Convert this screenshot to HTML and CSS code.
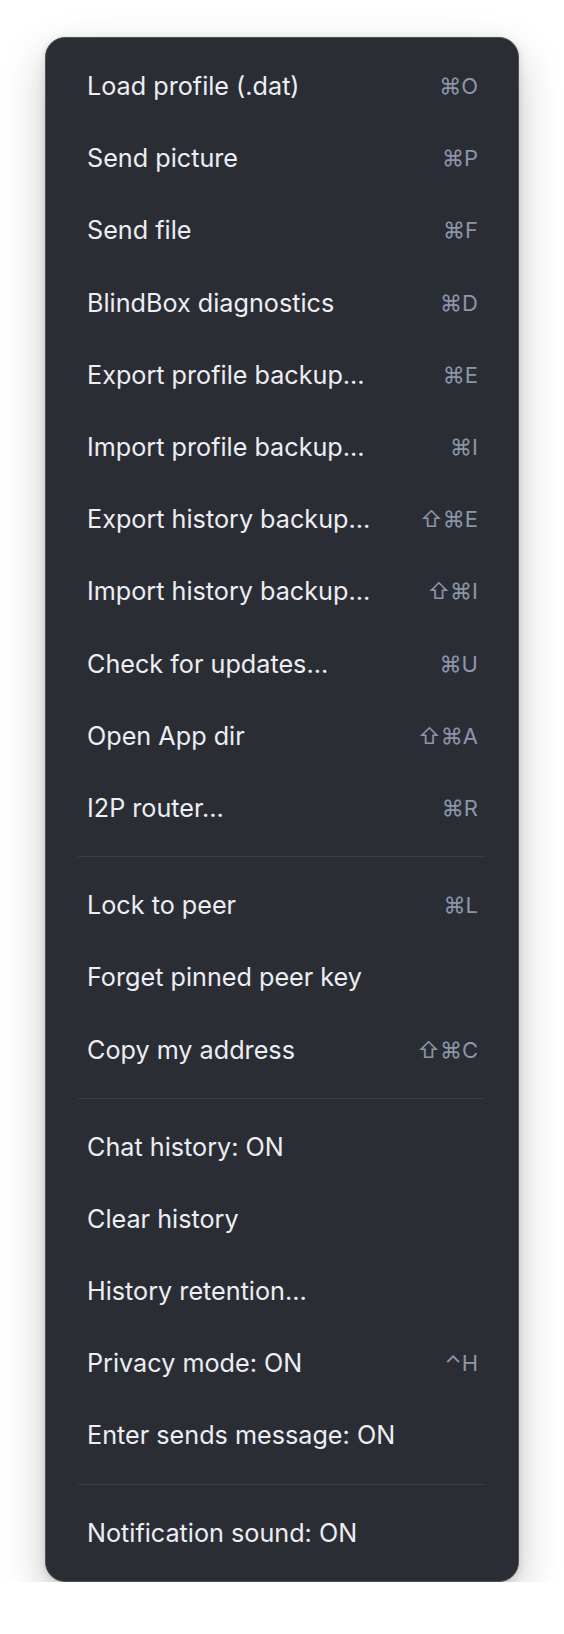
FILE: index.html
```html
<!DOCTYPE html>
<html lang="en">
<head>
<meta charset="utf-8">
<title>Menu</title>
<link rel="stylesheet" href="styles.css">
</head>
<body>
<div class="stage">
  <div class="menu" role="menu">
    <div class="item"><span class="label">Load profile (.dat)</span><span class="key">⌘O</span></div>
    <div class="item"><span class="label">Send picture</span><span class="key">⌘P</span></div>
    <div class="item"><span class="label">Send file</span><span class="key">⌘F</span></div>
    <div class="item"><span class="label">BlindBox diagnostics</span><span class="key">⌘D</span></div>
    <div class="item"><span class="label">Export profile backup…</span><span class="key">⌘E</span></div>
    <div class="item"><span class="label">Import profile backup…</span><span class="key">⌘I</span></div>
    <div class="item"><span class="label">Export history backup…</span><span class="key">⇧⌘E</span></div>
    <div class="item"><span class="label">Import history backup…</span><span class="key">⇧⌘I</span></div>
    <div class="item"><span class="label">Check for updates…</span><span class="key">⌘U</span></div>
    <div class="item"><span class="label">Open App dir</span><span class="key">⇧⌘A</span></div>
    <div class="item"><span class="label">I2P router…</span><span class="key">⌘R</span></div>
    <div class="sep"></div>
    <div class="item"><span class="label">Lock to peer</span><span class="key">⌘L</span></div>
    <div class="item"><span class="label">Forget pinned peer key</span></div>
    <div class="item"><span class="label">Copy my address</span><span class="key">⇧⌘C</span></div>
    <div class="sep"></div>
    <div class="item"><span class="label">Chat history: ON</span></div>
    <div class="item"><span class="label">Clear history</span></div>
    <div class="item"><span class="label">History retention…</span></div>
    <div class="item"><span class="label">Privacy mode: ON</span><span class="key">⌃H</span></div>
    <div class="item"><span class="label">Enter sends message: ON</span></div>
    <div class="sep"></div>
    <div class="item"><span class="label">Notification sound: ON</span></div>
  </div>
</div>
</body>
</html>
```
FILE: styles.css
```css
html, body {
  margin: 0;
  padding: 0;
  background: #ffffff;
}

body {
  font-family: "Inter", "Noto Sans", "DejaVu Sans", sans-serif;
}

.stage {
  padding: 37px 0 0 45px;
}

.menu {
  box-sizing: border-box;
  width: 474px;
  padding: 12px 32px;
  background: #2b2d35;
  border: 1px solid #505259;
  border-radius: 20px;
  box-shadow: 0 18px 44px rgba(0, 0, 0, 0.22), 0 2px 8px rgba(0, 0, 0, 0.12);
}

.item {
  display: flex;
  align-items: center;
  justify-content: space-between;
  height: 72.2px;
  padding: 0 8px 0 9px;
}

.label {
  color: #eceef3;
  font-size: 25.2px;
  letter-spacing: 0;
  white-space: nowrap;
}

.key {
  color: #8d95a9;
  font-size: 22px;
  white-space: nowrap;
  font-family: "Inter", "DejaVu Sans", sans-serif;
}

.sep {
  height: 1px;
  margin: 12px 0;
  background: #3a3e4a;
}
```
